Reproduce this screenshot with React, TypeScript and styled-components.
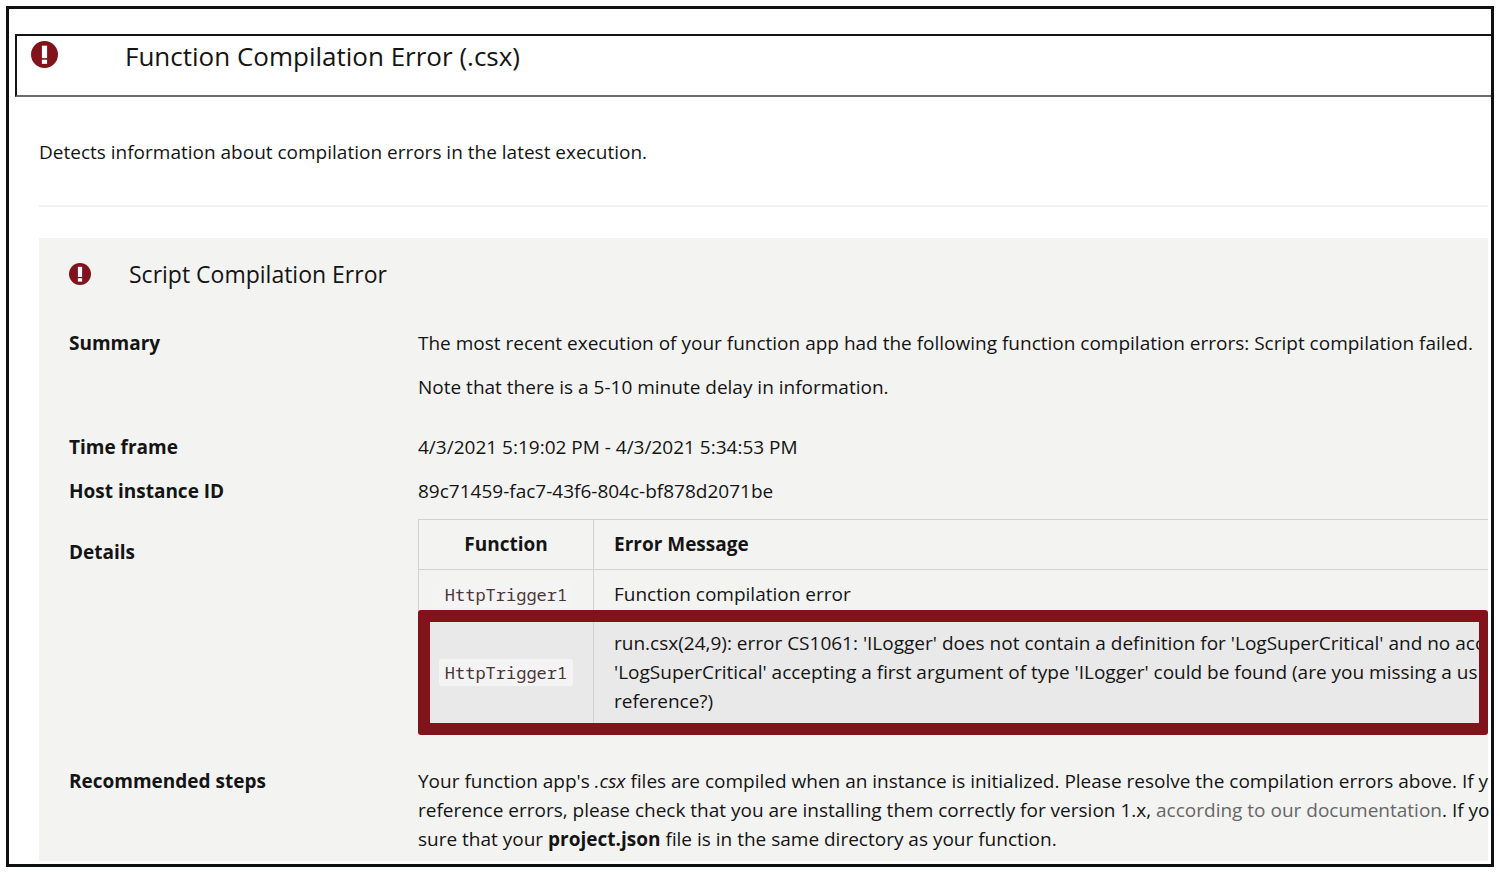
import React from "react";
import styled, { createGlobalStyle } from "styled-components";

const GlobalStyle = createGlobalStyle`
  * { box-sizing: border-box; }
  body {
    margin: 0;
    background: #fff;
    color: #141414;
    font-family: "Open Sans", "Noto Sans", sans-serif;
    font-size: 19px;
    line-height: 29px;
  }
`;

const Frame = styled.main`
  margin: 6px;
  min-height: calc(100vh - 12px);
  border: 3px solid #0f1111;
  padding: 25px 0 3px;
  overflow: hidden;
  display: flex;
  flex-direction: column;
`;

const Header = styled.header`
  display: flex;
  align-items: flex-start;
  gap: 67px;
  height: 63px;
  margin-left: 6px;
  padding: 5px 0 0 14px;
  border: 2px solid #141414;
  border-bottom-color: #6c6c6c;
  border-right: 0;
`;

const Title = styled.h1`
  margin: 0;
  font-size: 26px;
  line-height: 30px;
  font-weight: 400;
`;

const Description = styled.p`
  margin: 0 3px 0 30px;
  padding: 41px 0 38px;
  border-bottom: 2px solid #f1f1f1;
`;

const Panel = styled.section`
  flex: 1;
  margin: 31px 3px 0 30px;
  padding: 20px 0 7px 30px;
  background: #f3f3f2;
`;

const PanelHeader = styled.div`
  display: flex;
  align-items: center;
  gap: 38px;
  margin-bottom: 39px;
`;

const PanelTitle = styled.h2`
  margin: 0;
  font-size: 23px;
  line-height: 32px;
  font-weight: 400;
`;

const Entries = styled.dl`
  display: grid;
  grid-template-columns: 349px 1fr;
  margin: 0;
`;

const Term = styled.dt<{ $top?: number }>`
  padding-top: ${(p) => p.$top ?? 0}px;
  font-weight: 700;
`;

const Value = styled.dd<{ $gap?: number }>`
  min-width: 0;
  margin: 0 0 ${(p) => p.$gap ?? 15}px;
  white-space: nowrap;
`;

const Paragraph = styled.p`
  margin: 0 0 15px;
  &:last-child { margin: 0; }
`;

const TableWrap = styled.div`
  position: relative;
`;

const Table = styled.table`
  width: 100%;
  table-layout: fixed;
  border-collapse: collapse;
  border: 1px solid #d2d2d2;
  border-right: 0;
  border-bottom: 0;
`;

const Cell = styled.td<{ $center?: boolean }>`
  padding: 10px 0 10px ${(p) => (p.$center ? 0 : 20)}px;
  text-align: ${(p) => (p.$center ? "center" : "left")};
  border-left: 1px solid #d2d2d2;
`;

const HeadCell = styled(Cell)`
  width: ${(p) => (p.$center ? "175px" : "auto")};
  border-bottom: 1px solid #d2d2d2;
`;

const Row = styled.tr<{ $shaded?: boolean }>`
  background: ${(p) => (p.$shaded ? "#e9e9e9" : "transparent")};
`;

const Code = styled.code`
  padding: 2px 6px;
  border-radius: 3px;
  background: #f5f4f4;
  color: #4a3438;
  font-family: "Noto Sans Mono", "DejaVu Sans Mono", monospace;
  font-size: 17px;
`;

const Highlight = styled.div`
  position: absolute;
  inset: 91px 0 -9px 0;
  border: 12px solid #81131b;
  border-right-width: 9px;
  border-radius: 3px;
`;

const DocLink = styled.a`
  color: #666;
  text-decoration: none;
`;

const Icon = styled.svg`
  flex: none;
  display: block;
`;

function ErrorIcon({ size }: { size: number }) {
  return (
    <Icon width={size} height={size} viewBox="0 0 26 26" aria-hidden="true">
      <circle cx="13" cy="13" r="13" fill="#81131b" />
      <path d="M10.5 4.5h5V16.500h-5z" fill="#fff" />
      <rect x="10.5" y="18" width="5" height="4" fill="#fff" />
    </Icon>
  );
}

export default function App() {
  return (
    <>
      <GlobalStyle />
      <Frame>
        <Header>
          <ErrorIcon size={27} />
          <Title>Function Compilation Error (.csx)</Title>
        </Header>
        <Description>
          Detects information about compilation errors in the latest execution.
        </Description>
        <Panel>
          <PanelHeader>
            <ErrorIcon size={22} />
            <PanelTitle>Script Compilation Error</PanelTitle>
          </PanelHeader>
          <Entries>
            <Term>Summary</Term>
            <Value $gap={31}>
              <Paragraph>
                The most recent execution of your function app had the following function
                compilation errors: Script compilation failed.
              </Paragraph>
              <Paragraph>Note that there is a 5-10 minute delay in information.</Paragraph>
            </Value>
            <Term>Time frame</Term>
            <Value>4/3/2021 5:19:02 PM - 4/3/2021 5:34:53 PM</Value>
            <Term>Host instance ID</Term>
            <Value $gap={13}>89c71459-fac7-43f6-804c-bf878d2071be</Value>
            <Term $top={19}>Details</Term>
            <Value $gap={41}>
              <TableWrap>
                <Table>
                  <thead>
                    <tr>
                      <HeadCell as="th" scope="col" $center>Function</HeadCell>
                      <HeadCell as="th" scope="col">Error Message</HeadCell>
                    </tr>
                  </thead>
                  <tbody>
                    <Row>
                      <Cell $center><Code>HttpTrigger1</Code></Cell>
                      <Cell>Function compilation error</Cell>
                    </Row>
                    <Row $shaded>
                      <Cell $center><Code>HttpTrigger1</Code></Cell>
                      <Cell>
                        run.csx(24,9): error CS1061: 'ILogger' does not contain a definition for
                        'LogSuperCritical' and no acc
                        <br />
                        'LogSuperCritical' accepting a first argument of type 'ILogger' could be
                        found (are you missing a us
                        <br />
                        reference?)
                      </Cell>
                    </Row>
                  </tbody>
                </Table>
                <Highlight />
              </TableWrap>
            </Value>
            <Term>Recommended steps</Term>
            <Value $gap={0}>
              Your function app's <em>.csx</em> files are compiled when an instance is initialized.
              Please resolve the compilation errors above. If y
              <br />
              reference errors, please check that you are installing them correctly for version
              1.x, <DocLink href="#documentation">according to our documentation</DocLink>. If yo
              <br />
              sure that your <strong>project.json</strong> file is in the same directory as your
              function.
            </Value>
          </Entries>
        </Panel>
      </Frame>
    </>
  );
}
